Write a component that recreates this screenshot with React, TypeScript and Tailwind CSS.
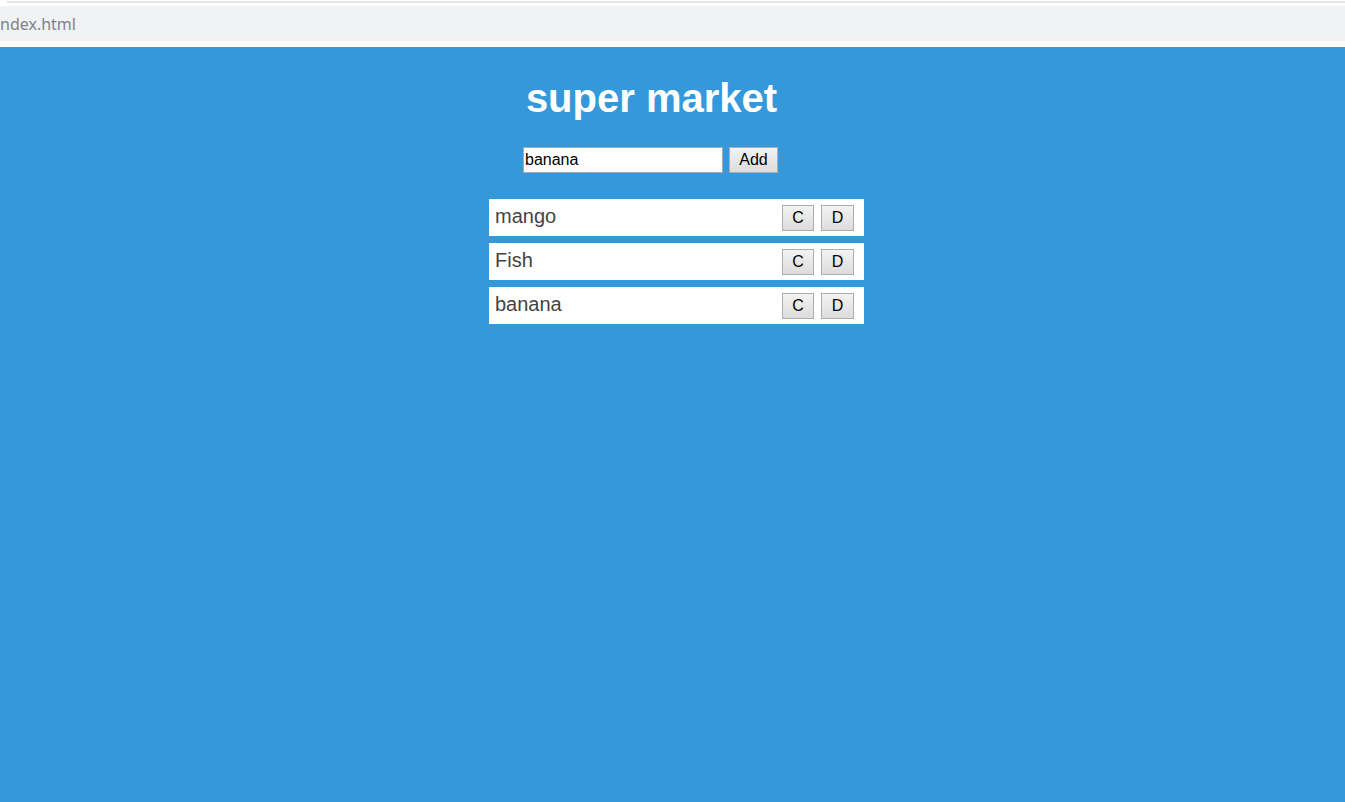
const items = ['mango', 'Fish', 'banana'];

const btn =
  'h-[26px] border border-[#adadad] bg-gradient-to-b from-[#f3f3f3] to-[#dcdcdc] text-[16px] leading-none text-black flex items-center justify-center';

export default function App() {
  return (
    <div className="min-h-screen flex flex-col bg-white font-['Liberation_Sans',Arial,sans-serif]">
      {/* browser address strip */}
      <div className="h-[6px] pt-[1px] pl-[7px]">
        <div className="h-[2px] bg-[#e3e4e7]" />
      </div>
      <div className="h-[35px] bg-[#f1f2f4] flex items-center text-[16px] text-[#7d838b] font-['Noto_Sans',sans-serif]">
        ndex.html
      </div>
      <div className="h-[6px]" />

      <div className="flex-1 bg-[#3598db] pl-[489px] pt-[28px]">
        <h1 className="w-[325px] text-center text-[40px] leading-[46px] font-bold text-white">super market</h1>

        <div className="mt-[26px] ml-[34px] flex gap-[6px]">
          <input
            defaultValue="banana"
            className="w-[200px] h-[26px] border border-[#a9a9a9] bg-white px-[1px] text-[16px] text-black outline-none"
          />
          <button className={btn + ' w-[49px]'}>Add</button>
        </div>

        <ul className="mt-[26px] w-[375px] flex flex-col gap-[7px]">
          {items.map((name) => (
            <li key={name} className="h-[37px] bg-white flex items-start justify-between pl-[6px] pr-[10px]">
              <span className="pt-[6px] text-[20px] leading-[23px] text-[#444]">{name}</span>
              <div className="self-center flex gap-[7px]">
                <button className={btn + ' w-[32px]'}>C</button>
                <button className={btn + ' w-[33px]'}>D</button>
              </div>
            </li>
          ))}
        </ul>
      </div>
    </div>
  );
}
